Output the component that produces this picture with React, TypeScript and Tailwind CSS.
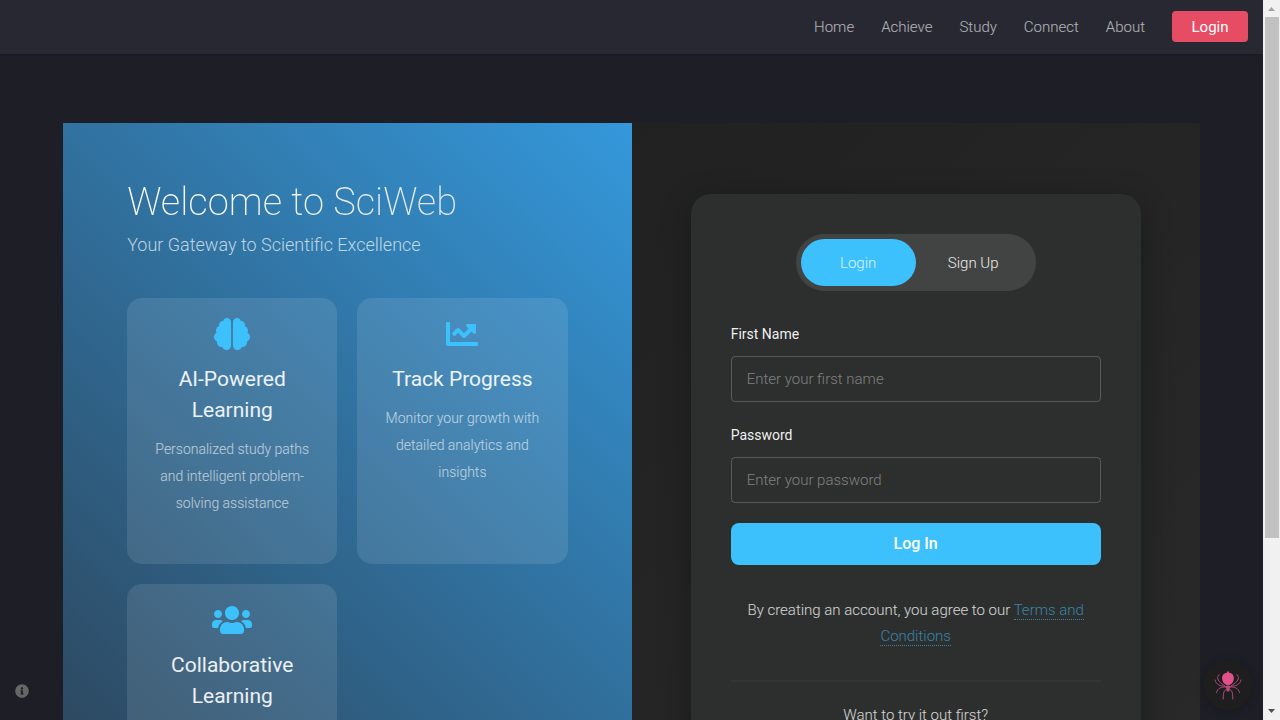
import type { ReactNode } from 'react';
import { FaBrain, FaChartLine, FaUsers, FaInfoCircle } from 'react-icons/fa';

const links = ['Home', 'Achieve', 'Study', 'Connect', 'About'];

function Feature({ icon, title, children }: { icon: ReactNode; title: string; children: ReactNode }) {
  return (
    <article className="flex min-h-[266px] flex-col items-center rounded-[15px] bg-white/10 px-5 pt-5 text-center">
      <div className="text-[#3dc1fc]">{icon}</div>
      <h2 className="mt-[14px] text-[21px] leading-[31px] font-normal text-white/90">{title}</h2>
      <p className="mt-[10px] text-[14px] leading-[27px] font-light text-white/65">{children}</p>
    </article>
  );
}

function Field({ id, label, type, placeholder }: { id: string; label: string; type: string; placeholder: string }) {
  return (
    <div className="mb-5">
      <label htmlFor={id} className="mb-2 block text-[14px] leading-[27px] text-white/95">
        {label}
      </label>
      <input
        id={id}
        type={type}
        placeholder={placeholder}
        className="block h-[46px] w-full rounded border border-white/20 bg-transparent px-[15px] text-[15px] font-light text-white outline-none placeholder:text-[#808080]"
      />
    </div>
  );
}

function Spider() {
  return (
    <svg viewBox="0 0 30 30" className="size-[30px]" fill="none" stroke="#a84c78" strokeWidth="1" strokeLinecap="round">
      <path d="M12.500 16.500C9 13.500 5.500 12 4.800 9C4.300 7 5 5.500 6.200 4.500M12.500 16.500C7.500 16 3 15 2 10M12.500 17C8.500 16.800 4.500 18 3.500 22.500M13.500 19.500C11 20.300 10.200 22 10.200 29" />
      <path d="M17.500 16.500C21 13.500 24.500 12 25.200 9C25.700 7 25 5.500 23.800 4.500M17.500 16.500C22.500 16 27 15 28 10M17.500 17C21.500 16.800 25.500 18 26.500 22.500M16.500 19.500C19 20.300 19.800 22 19.800 29" />
      <path stroke="none" fill="#e2508a" d="M15 .8l1.200 1.900c3.300.5 5 3.100 4.700 6.100-.3 3.300-2.500 5.700-4.600 6.300h-2.600C11.600 14.500 9.400 12.100 9.100 8.800c-.3-3 1.400-5.600 4.700-6.100z" />
      <path stroke="none" fill="#b8497c" d="M13.400 15.400h3.200l.8 1.700-.8 2-.5 3-1.100-1.200-1.100 1.200-.5-3-.8-2z" />
    </svg>
  );
}

function ScrollRail() {
  return (
    <div aria-hidden="true" className="flex w-[17px] shrink-0 flex-col items-center bg-[#f1f1f1]">
      <svg viewBox="0 0 17 17" className="size-[17px]">
        <path d="M5 11h7L8.500 7z" fill="#a3a3a3" />
      </svg>
      <div className="flex w-[14px] flex-1 flex-col">
        <div className="basis-[76%] bg-[#c1c1c1]" />
      </div>
      <svg viewBox="0 0 17 17" className="size-[17px]">
        <path d="M5 6h7l-3.500 4z" fill="#505050" />
      </svg>
    </div>
  );
}

export default function App() {
  return (
    <div className="flex h-screen overflow-hidden bg-[#1e1e27] font-[Roboto,sans-serif] text-white">
      <div className="flex min-w-0 flex-1 flex-col overflow-hidden">
        <header className="flex h-[54px] shrink-0 items-center justify-end bg-[#282832] pr-[15px] pb-px shadow-[0_1px_2px_rgba(0,0,0,0.2)]">
          <nav className="flex items-center gap-[27px] text-[15px] font-light text-white/65">
            {links.map((link) => (
              <a key={link} href="#" className="pt-0.5">
                {link}
              </a>
            ))}
            <a href="#" className="flex h-[31px] w-[76px] items-center justify-center rounded bg-[#e74c65] pt-0.5 font-normal text-white">
              Login
            </a>
          </nav>
        </header>

        <main className="mx-[5%] mt-[69px] grid min-h-[763px] shrink-0 grid-cols-2">
          <section className="bg-[linear-gradient(45deg,#2c3e50,#3498db)] px-16 pt-[52px]">
            <h1 className="bg-linear-to-r from-white to-[#d8dde2] bg-clip-text text-[38px] leading-[54px] font-extralight text-transparent">
              Welcome to SciWeb
            </h1>
            <p className="mt-px text-[18px] leading-[30px] font-light text-white/70">Your Gateway to Scientific Excellence</p>
            <div className="mt-[38px] grid grid-cols-2 gap-5">
              <Feature icon={<FaBrain className="h-8 w-9" />} title="AI-Powered Learning">
                Personalized study paths and intelligent problem-solving assistance
              </Feature>
              <Feature icon={<FaChartLine className="size-8" />} title="Track Progress">
                Monitor your growth with detailed analytics and insights
              </Feature>
              <Feature icon={<FaUsers className="h-8 w-10" />} title="Collaborative Learning">
                Connect with peers and share knowledge
              </Feature>
            </div>
          </section>

          <section className="flex items-start justify-center bg-[linear-gradient(135deg,#212121,#2a2a2a)] pt-[71px]">
            <div className="min-h-[620px] w-[450px] rounded-[20px] bg-[#2d2f2e] p-10 shadow-[0_8px_32px_rgba(0,0,0,0.3)]">
              <div className="mx-auto flex w-60 rounded-[30px] bg-white/10 p-[5px]">
                <button type="button" className="h-[47px] flex-1 rounded-[25px] bg-[#3dc1fc] pt-px text-[15px] font-light text-white/80">
                  Login
                </button>
                <button type="button" className="h-[47px] flex-1 rounded-[25px] pt-px text-[15px] font-light text-white/90">
                  Sign Up
                </button>
              </div>
              <form className="mt-[30px]">
                <Field id="first-name" label="First Name" type="text" placeholder="Enter your first name" />
                <Field id="password" label="Password" type="password" placeholder="Enter your password" />
                <button type="submit" className="h-[42px] w-full rounded-lg bg-[#3dc1fc] text-[16px] font-medium text-white">
                  Log In
                </button>
              </form>
              <p className="mt-8 text-center text-[15px] leading-[26px] font-light text-white/80">
                By creating an account, you agree to our{' '}
                <a href="#" className="border-b border-dotted border-[#3785a8] text-[#3785a8]">
                  Terms and Conditions
                </a>
              </p>
              <div className="mt-[31px] border-t-2 border-white/[0.03] pt-5 text-center text-[15px] leading-[26px] font-light text-white/80">
                Want to try it out first?
              </div>
            </div>
          </section>
        </main>
      </div>

      <ScrollRail />

      <button type="button" aria-label="Information" className="fixed bottom-[22px] left-[15px] text-[14px] text-[#666]">
        <FaInfoCircle />
      </button>
      <button type="button" aria-label="Assistant" className="fixed right-[27px] bottom-[10px] flex size-[50px] items-center justify-center rounded-full bg-[#1e1e1e] shadow-[0_2px_10px_rgba(0,0,0,0.2)]">
        <Spider />
      </button>
    </div>
  );
}
